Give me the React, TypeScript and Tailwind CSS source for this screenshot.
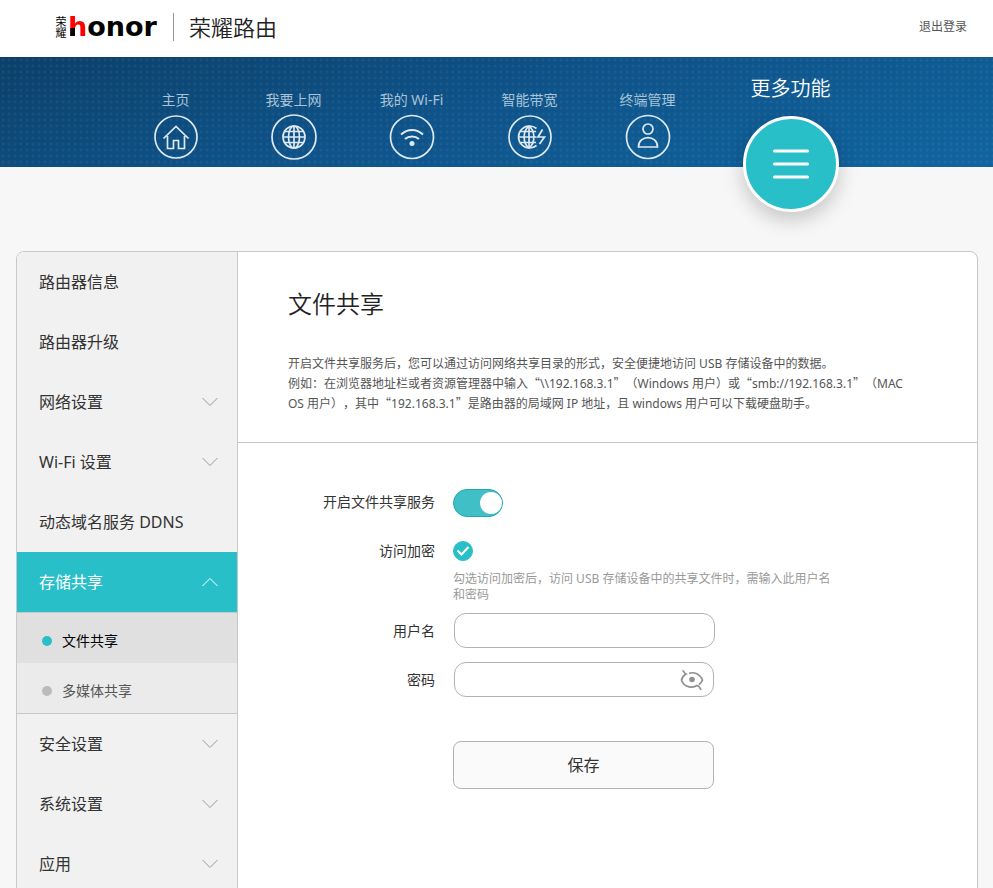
import { useState, type ReactNode } from "react";

type NavItem = { label: string; icon: ReactNode };

const globe = (
  <>
    <circle cx="23" cy="23" r="11" />
    <ellipse cx="23" cy="23" rx="5.5" ry="11" />
    <path d="M23 12v22M12 23h22M14 17.5h18M14 28.5h18" />
  </>
);

const navItems: NavItem[] = [
  {
    label: "主页",
    icon: (
      <>
        <circle cx="23" cy="23" r="21" />
        <path d="M10.5 24.5 23 12.5l12.5 12M14.5 22v12.5h6v-8h5v8h6V22" />
      </>
    ),
  },
  {
    label: "我要上网",
    icon: (
      <>
        <circle cx="23" cy="23" r="22" />
        {globe}
      </>
    ),
  },
  {
    label: "我的 Wi-Fi",
    icon: (
      <>
        <circle cx="23" cy="23" r="21.5" />
        <path strokeWidth="2" d="M12 20.5c6.5-6 15.5-6 22 0M16 25c4-3.5 10-3.5 14 0" />
        <circle cx="23" cy="29.5" r="2.5" fill="currentColor" stroke="none" />
      </>
    ),
  },
  {
    label: "智能带宽",
    icon: (
      <>
        <circle cx="23" cy="23" r="21" />
        <path d="M29.5 14.5a11 11 0 1 0 0 17M22 12v22M11 23h18.5M13 17.5h16M13 28.5h16" />
        <path d="M22 12c-6.5 5-6.5 17 0 22M22 12c6.5 5 6.5 17 0 22" />
        <path d="M35.5 15.5 31 23h6.5l-5 7" />
      </>
    ),
  },
  {
    label: "终端管理",
    icon: (
      <>
        <circle cx="23" cy="23" r="21.5" />
        <circle cx="23" cy="15" r="5" />
        <path d="M13.5 33c0-12.5 19-12.5 19 0z" />
      </>
    ),
  },
];

function Chevron({ up = false }: { up?: boolean }) {
  return (
    <svg
      width="16"
      height="10"
      viewBox="0 0 16 10"
      fill="none"
      stroke="currentColor"
      aria-hidden="true"
      className={up ? "rotate-180 text-white" : "text-[#999]"}
    >
      <path d="M.5 1 8 8.5 15.5 1" />
    </svg>
  );
}

function Header() {
  return (
    <header className="flex h-[57px] items-center bg-white pr-[26px] pb-1 pl-[52px]">
      <div className="flex items-center">
        <span className="text-[11px] leading-4 text-black [writing-mode:vertical-rl]">荣耀</span>
        <span className="font-['DejaVu_Sans'] text-[27px] leading-8 font-bold text-black">
          <span className="bg-[linear-gradient(#000,#000),linear-gradient(#f00,#f00)] bg-[size:8px_14px,100%_100%] bg-[position:0_100%,0_0] bg-no-repeat bg-clip-text text-transparent">
            h
          </span>
          onor
        </span>
      </div>
      <span className="ml-4 h-7 w-px bg-[#999]" />
      <span className="ml-[15px] text-[22px] leading-8 font-[350] text-[#222]">荣耀路由</span>
      <a href="#logout" className="ml-auto text-xs text-[#555]">
        退出登录
      </a>
    </header>
  );
}

function TopNav() {
  return (
    <nav className="flex h-[110px] justify-center bg-[radial-gradient(circle,#ffffff0d_1px,transparent_2px),linear-gradient(165deg,#0b4069,#0e5288_45%,#1065a0)] bg-[size:6px_6px,auto] pr-[2px]">
      {navItems.map((item) => (
        <a
          key={item.label}
          href="#nav"
          className="flex w-[118px] flex-col items-center pt-[33px] text-[#a9c3d6]"
        >
          <span className="text-sm leading-5">{item.label}</span>
          <svg
            width="46"
            height="46"
            viewBox="0 0 46 46"
            fill="none"
            stroke="currentColor"
            strokeWidth="1.7"
            aria-hidden="true"
            className="mt-1 text-[#dfe9f1]"
          >
            {item.icon}
          </svg>
        </a>
      ))}
      <a href="#more" className="flex w-[168px] flex-col items-center pt-[18px] text-white">
        <span className="text-xl leading-7 font-[350]">更多功能</span>
        <span className="mt-[13px] flex size-24 shrink-0 items-center justify-center rounded-full border-[3px] border-white bg-[#29bfc8] shadow-[0_8px_20px_#00000033]">
          <svg
            width="38"
            height="30"
            viewBox="0 0 38 30"
            stroke="currentColor"
            strokeWidth="3"
            strokeLinecap="round"
            aria-hidden="true"
          >
            <path d="M2.5 2h33M2.5 15h33M2.5 28h33" />
          </svg>
        </span>
      </a>
    </nav>
  );
}

function MenuItem({ label, expandable = false }: { label: string; expandable?: boolean }) {
  return (
    <a href="#menu" className="flex h-[60px] items-center justify-between pr-[19px] pl-[22px]">
      {label}
      {expandable && <Chevron />}
    </a>
  );
}

function Sidebar() {
  return (
    <aside className="w-[221px] shrink-0 border-r border-[#c8c8c8] bg-[#f1f1f1] text-base text-[#333]">
      <MenuItem label="路由器信息" />
      <MenuItem label="路由器升级" />
      <MenuItem label="网络设置" expandable />
      <MenuItem label="Wi-Fi 设置" expandable />
      <MenuItem label="动态域名服务 DDNS" />
      <a
        href="#storage"
        className="flex h-[60px] items-center justify-between bg-[#29bfc8] pr-[19px] pl-[22px] text-white"
      >
        存储共享
        <Chevron up />
      </a>
      <div className="border-y border-[#c8c8c8] text-sm">
        <a href="#file" className="flex h-[50px] items-center gap-[10px] bg-[#e0e0e0] pt-[6px] pl-[25px] text-black">
          <span className="size-[10px] rounded-full bg-[#29bfc8]" />
          文件共享
        </a>
        <a href="#media" className="flex h-[50px] items-center gap-[10px] bg-[#ebebeb] pt-[6px] pl-[25px] text-[#555]">
          <span className="size-[10px] rounded-full bg-[#bbb]" />
          多媒体共享
        </a>
      </div>
      <MenuItem label="安全设置" expandable />
      <MenuItem label="系统设置" expandable />
      <MenuItem label="应用" expandable />
    </aside>
  );
}

function Quoted({ children }: { children: string }) {
  return (
    <>
      <span className="inline-block font-['Noto_Sans_CJK_SC',sans-serif] leading-4">“</span>
      {children}
      <span className="inline-block font-['Noto_Sans_CJK_SC',sans-serif] leading-4">”</span>
    </>
  );
}

function SharingForm() {
  const [enabled, setEnabled] = useState(true);
  const [encrypted, setEncrypted] = useState(true);
  const [visible, setVisible] = useState(false);

  return (
    <form
      className="grid grid-cols-[147px_1fr] gap-x-[18px] pt-[46px] pl-[50px] text-sm text-[#333]"
      onSubmit={(event) => event.preventDefault()}
    >
      <label htmlFor="service" className="pt-[3px] text-right leading-5">
        开启文件共享服务
      </label>
      <input
        id="service"
        type="checkbox"
        role="switch"
        checked={enabled}
        onChange={() => setEnabled(!enabled)}
        className="h-7 w-[50px] appearance-none rounded-full border border-[#bbb] bg-[#ccc] p-[2px] before:block before:size-[22px] before:rounded-full before:bg-white checked:border-[#22a7ad] checked:bg-[#40c0c6] checked:before:ml-6"
      />

      <label htmlFor="encrypt" className="mt-6 text-right leading-5">
        访问加密
      </label>
      <div className="mt-6">
        <span className="relative block size-5">
          <input
            id="encrypt"
            type="checkbox"
            checked={encrypted}
            onChange={() => setEncrypted(!encrypted)}
            className="block size-5 appearance-none rounded-full border border-[#bbb] checked:border-[#29bfc8] checked:bg-[#29bfc8]"
          />
          <svg
            viewBox="0 0 20 20"
            fill="none"
            stroke="white"
            strokeWidth="2"
            aria-hidden="true"
            className="pointer-events-none absolute inset-0 size-5"
          >
            <path d="m4.5 9.5 4 4 7-7.5" />
          </svg>
        </span>
        <p className="mt-[10px] w-96 text-xs leading-4 text-[#999]">
          勾选访问加密后，访问 USB 存储设备中的共享文件时，需输入此用户名和密码
        </p>
      </div>

      <label htmlFor="user" className="mt-[10px] text-right leading-[35px]">
        用户名
      </label>
      <input
        id="user"
        type="text"
        className="mt-[10px] ml-px h-[35px] w-[261px] rounded-xl border border-[#b2b2b2] bg-white px-3 outline-none"
      />

      <label htmlFor="password" className="mt-[14px] text-right leading-[35px]">
        密码
      </label>
      <div className="mt-[14px] ml-px flex h-[35px] w-[260px] items-center rounded-xl border border-[#b2b2b2] bg-white pr-[9px] pl-3">
        <input
          id="password"
          type={visible ? "text" : "password"}
          className="min-w-0 flex-1 bg-transparent outline-none"
        />
        <button type="button" aria-label="显示密码" onClick={() => setVisible(!visible)}>
          <svg
            width="24"
            height="22"
            viewBox="0 0 24 22"
            fill="none"
            stroke="#909090"
            strokeWidth="1.7"
            aria-hidden="true"
          >
            <path d="M2.5 1.5c1.5.3 1.2 2.5 3.5 3.5C3.5 6.5 2 9 1.5 11c3 8.5 12 8 15.5 5.5 2.5.5 3 2 4 4.5" />
            <path d="M9 4.2c5.5-1.5 11 .8 13.5 6.8-.8 2-2 3.6-3.5 4.7" />
            <circle cx="12" cy="10.5" r="2.8" fill="#909090" stroke="none" />
          </svg>
        </button>
      </div>

      <button
        type="submit"
        className="col-start-2 mt-11 h-12 w-[261px] rounded-lg border border-[#b2b2b2] bg-[#fafafa] text-base"
      >
        保存
      </button>
    </form>
  );
}

export default function App() {
  return (
    <div className="h-screen overflow-hidden bg-[#f7f7f7] font-['Noto_Sans','Noto_Sans_CJK_SC',sans-serif]">
      <Header />
      <TopNav />
      <main className="mt-[84px] mr-[15px] ml-4 flex min-h-[720px] overflow-hidden rounded-t-lg border border-[#c8c8c8] bg-white">
        <Sidebar />
        <div className="min-w-0 flex-1">
          <section className="border-b border-[#c8c8c8] pt-[34px] pr-[60px] pb-7 pl-[50px]">
            <h1 className="text-2xl leading-9 font-[350] text-[#222]">文件共享</h1>
            <p className="mt-8 text-xs leading-5 text-[#555] [text-spacing-trim:space-all]">
              开启文件共享服务后，您可以通过访问网络共享目录的形式，安全便捷地访问 USB 存储设备中的数据。
              <br />
              例如：在浏览器地址栏或者资源管理器中输入<Quoted>{"\\\\192.168.3.1"}</Quoted>
              （Windows 用户）或<Quoted>smb://192.168.3.1</Quoted>（MAC <span>OS 用户），其中</span>
              <Quoted>192.168.3.1</Quoted>是路由器的局域网 IP 地址，且 windows 用户可以下载硬盘助手。
            </p>
          </section>
          <SharingForm />
        </div>
      </main>
    </div>
  );
}
